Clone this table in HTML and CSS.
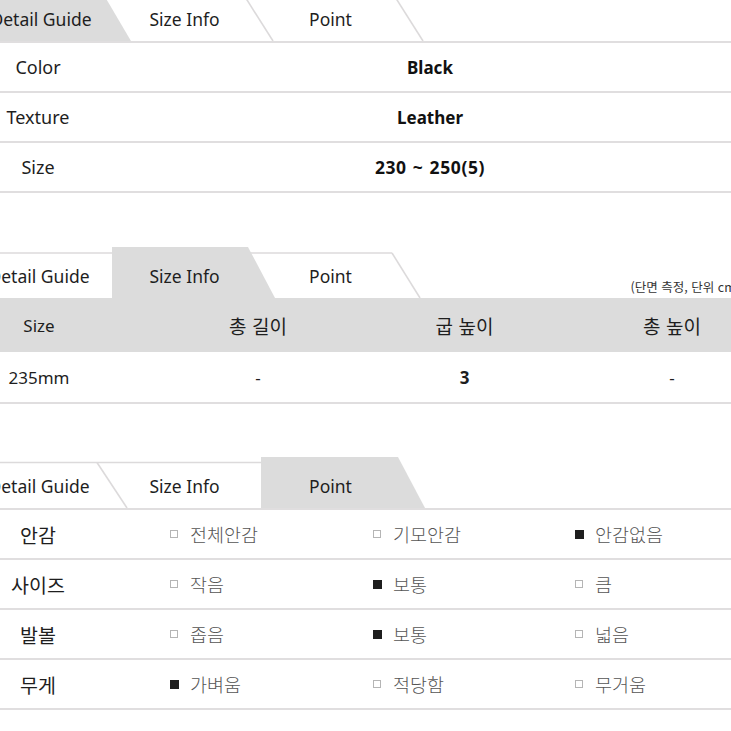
FILE: index.html
```html
<!DOCTYPE html>
<html lang="ko">
<head>
<meta charset="utf-8">
<title>Detail Guide</title>
<link rel="stylesheet" href="styles.css">
</head>
<body>
<div class="page">

  <section class="block block-detail">
    <div class="tabs">
      <svg class="tab-bg" width="860" height="51" viewBox="-40 0 860 51">
        <line x1="104" y1="6" x2="395" y2="6" class="tl"/>
        <line x1="244.5" y1="6" x2="273" y2="51" class="tl"/>
        <line x1="394.5" y1="6" x2="423" y2="51" class="tl"/>
        <polygon points="-40,0 101,0 131,51 -40,51" class="ta"/>
      </svg>
      <div class="tab-labels first">
        <span class="tab t1">Detail Guide</span>
        <span class="tab t2">Size Info</span>
        <span class="tab t3">Point</span>
      </div>
    </div>
    <div class="table detail-table">
      <div class="row">
        <div class="cell label">Color</div>
        <div class="cell value">Black</div>
      </div>
      <div class="row">
        <div class="cell label">Texture</div>
        <div class="cell value">Leather</div>
      </div>
      <div class="row">
        <div class="cell label">Size</div>
        <div class="cell value num">230 ~ 250(5)</div>
      </div>
    </div>
  </section>

  <section class="block block-size">
    <div class="tabs">
      <svg class="tab-bg" width="860" height="51" viewBox="-40 0 860 51">
        <line x1="-40" y1="6" x2="113" y2="6" class="tl"/>
        <line x1="250" y1="6" x2="392" y2="6" class="tl"/>
        <line x1="392" y1="6" x2="420" y2="51" class="tl"/>
        <polygon points="112,0 248,0 275,51 112,51" class="ta"/>
      </svg>
      <div class="tab-labels">
        <span class="tab t1">Detail Guide</span>
        <span class="tab t2">Size Info</span>
        <span class="tab t3">Point</span>
        <span class="note">(단면 측정, 단위 cm)</span>
      </div>
    </div>
    <div class="size-table">
      <div class="srow shead">
        <div class="scell">Size</div>
        <div class="scell ko">총 길이</div>
        <div class="scell ko">굽 높이</div>
        <div class="scell ko">총 높이</div>
      </div>
      <div class="srow sdata">
        <div class="scell">235mm</div>
        <div class="scell">-</div>
        <div class="scell strong">3</div>
        <div class="scell">-</div>
      </div>
    </div>
  </section>

  <section class="block block-point">
    <div class="tabs">
      <svg class="tab-bg" width="860" height="51" viewBox="-40 0 860 51">
        <line x1="-40" y1="5.5" x2="262" y2="5.5" class="tl"/>
        <line x1="97" y1="5.5" x2="127" y2="51" class="tl"/>
        <polygon points="261,0 398,0 425,51 261,51" class="ta"/>
      </svg>
      <div class="tab-labels">
        <span class="tab t1">Detail Guide</span>
        <span class="tab t2">Size Info</span>
        <span class="tab t3">Point</span>
      </div>
    </div>
    <div class="table point-table">
      <div class="prow">
        <div class="pcell plabel">안감</div>
        <div class="pcell opt"><i class="cb"></i>전체안감</div>
        <div class="pcell opt"><i class="cb"></i>기모안감</div>
        <div class="pcell opt"><i class="cb on"></i>안감없음</div>
      </div>
      <div class="prow">
        <div class="pcell plabel">사이즈</div>
        <div class="pcell opt"><i class="cb"></i>작음</div>
        <div class="pcell opt"><i class="cb on"></i>보통</div>
        <div class="pcell opt"><i class="cb"></i>큼</div>
      </div>
      <div class="prow">
        <div class="pcell plabel">발볼</div>
        <div class="pcell opt"><i class="cb"></i>좁음</div>
        <div class="pcell opt"><i class="cb on"></i>보통</div>
        <div class="pcell opt"><i class="cb"></i>넓음</div>
      </div>
      <div class="prow">
        <div class="pcell plabel">무게</div>
        <div class="pcell opt"><i class="cb on"></i>가벼움</div>
        <div class="pcell opt"><i class="cb"></i>적당함</div>
        <div class="pcell opt"><i class="cb"></i>무거움</div>
      </div>
    </div>
  </section>

</div>
</body>
</html>
```
FILE: styles.css
```css
html, body {
  margin: 0;
  padding: 0;
  background: #ffffff;
  overflow: hidden;
}

body {
  font-family: "Noto Sans", "Noto Sans CJK KR", sans-serif;
  font-size: 17px;
  color: #1e1e1e;
}

.page {
  width: 860px;
  margin: -10px 0 0 -40px;
}

.block-size {
  margin-top: 54px;
}

.block-point {
  margin-top: 53px;
}

/* tab bar */
.tabs {
  display: grid;
  height: 51px;
}

.tab-bg,
.tab-labels {
  grid-area: 1 / 1;
}

.tab-bg {
  display: block;
}

.tl {
  stroke: #dcdadb;
  stroke-width: 1.6;
  fill: none;
}

.ta {
  fill: #dcdcdc;
}

.tab-labels {
  display: flex;
  padding-top: 6px;
  height: 45px;
}

.tab {
  display: flex;
  align-items: center;
  justify-content: center;
  font-size: 17.5px;
  color: #1e1e1e;
}

.t1 { width: 158px; }
.t2 { width: 133px; }
.t3 { width: 159px; }

.first .t1 {
  padding-left: 4px;
  width: 154px;
}

.note {
  margin-left: auto;
  align-self: flex-end;
  padding: 0 80px 3px 0;
  font-family: "Noto Sans CJK KR", sans-serif;
  font-size: 12.5px;
  line-height: 16px;
  color: #333333;
  white-space: nowrap;
}

/* detail table */
.table {
  border-top: 2px solid #e0dedf;
}

.row {
  display: grid;
  grid-template-columns: 156px 628px 1fr;
  height: 48px;
  border-bottom: 2px solid #e0dedf;
}

.cell {
  display: flex;
  align-items: center;
  justify-content: center;
}

.label {
  font-size: 18px;
}

.value {
  font-weight: 700;
  color: #111111;
}

.num {
  font-size: 17.5px;
  letter-spacing: 0.6px;
  word-spacing: 1px;
}

/* size table */
.srow {
  display: grid;
  grid-template-columns: 158px 280px 133px 282px 1fr;
}

.shead {
  height: 54px;
  background: #dcdcdc;
}

.sdata {
  height: 50px;
  border-bottom: 2px solid #e0dedf;
}

.scell {
  display: flex;
  align-items: center;
  justify-content: center;
}

.scell.ko {
  font-family: "Noto Sans CJK KR", sans-serif;
  font-size: 19px;
}

.strong {
  font-weight: 700;
}

/* point table */
.prow {
  display: grid;
  grid-template-columns: 156px 203px 202px 1fr;
  height: 48px;
  border-bottom: 2px solid #e0dedf;
}

.pcell {
  display: flex;
  align-items: center;
}

.plabel {
  justify-content: center;
  font-family: "Noto Sans CJK KR", sans-serif;
  font-size: 19.5px;
  color: #1e1e1e;
}

.opt {
  padding-left: 54px;
  font-family: "Noto Sans CJK KR", sans-serif;
  font-size: 18.5px;
  font-weight: 300;
  color: #555555;
}

.cb {
  display: inline-block;
  box-sizing: border-box;
  width: 8px;
  height: 8px;
  border: 1px solid #b5b5b5;
  margin-right: 12px;
}

.cb.on {
  width: 9px;
  height: 9px;
  border: none;
  background: #1e1e1e;
  margin-right: 11px;
}
```
